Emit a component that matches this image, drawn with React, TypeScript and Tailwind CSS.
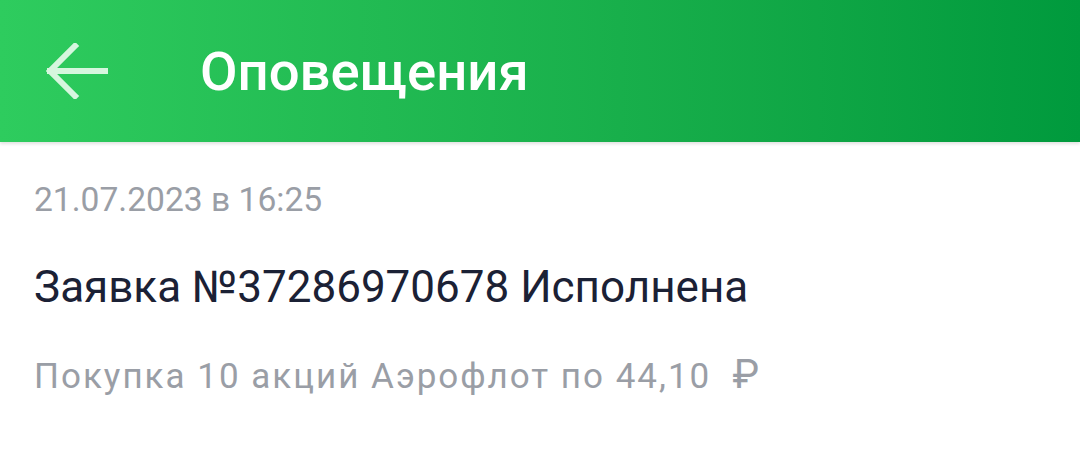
import React from "react";

export default function App() {
  return (
    <div
      className="w-[1080px] h-[467px] bg-white overflow-hidden"
      style={{ fontFamily: "Roboto, 'Noto Sans', sans-serif" }}
    >
      <div className="h-[142px] flex items-center bg-gradient-to-r from-[#2ecc5e] to-[#009a3d] shadow-[0_2px_3px_rgba(0,0,0,0.12)] relative">
        <div className="w-[200px] pl-[46px] flex items-center">
          <svg width="62" height="56" viewBox="0 0 62 56" fill="none">
            <path
              d="M29 3 L4 28 L29 53 M4 28 H60"
              stroke="#d6f6de"
              strokeWidth="6"
              strokeLinecap="square"
            />
          </svg>
        </div>
        <div className="text-white font-medium text-[54.5px] leading-none">
          Оповещения
        </div>
      </div>
      <div className="pl-[34px] pt-[38px]">
        <div className="text-[33.6px] leading-[40px] text-[#9a9ea6]">
          21.07.2023 в 16:25
        </div>
        <div className="mt-[41px] text-[44px] leading-[52px] text-[#1b2135]">
          Заявка №37286970678 Исполнена
        </div>
        <div className="mt-[42px] text-[35px] leading-[42px] tracking-[2px] text-[#9a9ea6]">
          Покупка 10 акций Аэрофлот по 44,10&nbsp;{" "}
          <span className="text-[40px] leading-none">₽</span>
        </div>
      </div>
    </div>
  );
}
